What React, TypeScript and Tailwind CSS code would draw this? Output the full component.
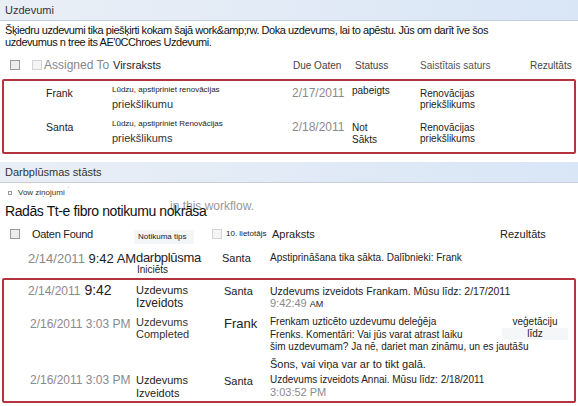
import React from 'react';

const Box = ({ light = false }: { light?: boolean }) => (
  <span
    className={`inline-block w-[10px] h-[10px] border ${
      light ? 'border-[#d4d4d4] bg-[#f4f4f4]' : 'border-[#9a9a9a] bg-[#ececec]'
    }`}
  />
);

const Bar = ({ title }: { title: string }) => (
  <div className="h-[21px] flex items-center pl-[5px] bg-gradient-to-r from-[#eaeff6] to-[#d9e6f6] border-b border-[#c4cdd8] text-[11px] text-[#333]">
    {title}
  </div>
);

const tasks = [
  { who: 'Frank', t1: 'Lūdzu, apstipriniet renovācijas', t2: 'priekšlikumu', date: '2/17/2011', st: ['pabeigts'], stPad: 'pt-[1px]', rel: ['Renovācijas', 'priekšlikums'], relPad: 'pt-[4px]' },
  { who: 'Santa', t1: 'Lūdzu, apstipriniet Renovācijas', t2: 'priekšlikums', date: '2/18/2011', st: ['Not', 'Sākts'], stPad: 'pt-[4px]', rel: ['Renovācijas', 'priekšlikums'], relPad: 'pt-[4px]' },
];

export default function App() {
  return (
    <div className="w-[578px] h-[406px] overflow-hidden bg-white text-[#222] font-['Liberation_Sans',Arial,sans-serif]">
      {/* Tasks */}
      <Bar title="Uzdevumi" />
      <div className="pl-[5px] pt-[3px] text-[11px] leading-[12px] tracking-[-0.45px] text-[#111]">
        <div>Šķiedru uzdevumi tika piešķirti kokam šajā work&amp;amp;rw. Doka uzdevums, lai to apēstu. Jūs om darīt īve šos</div>
        <div>uzdevumus n tree its AE'0CChroes Uzdevumi.</div>
      </div>

      <div className="flex items-center h-[20px] mt-[7px] text-[11px]">
        <div className="w-[30px] pl-[10px] flex"><Box /></div>
        <div className="w-[82px] pl-[2px] flex items-center gap-[2px]">
          <Box light />
          <span className="text-[12px] text-[#888]">Assigned To</span>
        </div>
        <div className="w-[178px] pl-[1px]">Virsraksts</div>
        <div className="w-[62px] pl-[3px] text-[10px] text-[#444]">Due Oaten</div>
        <div className="w-[66px] pl-[3px] text-[10px] text-[#444]">Statuss</div>
        <div className="w-[110px] pl-[2px] text-[10px] text-[#555]">Saistītais saturs</div>
        <div className="pl-[2px] text-[10px] text-[#444]">Rezultāts</div>
      </div>

      <div className="mx-[2px] mt-[4px] border-2 border-[#b3343d] rounded-[2px] h-[75px] pt-[3px] flex flex-col">
        {tasks.map((r) => (
          <div key={r.who} className="flex h-[34px]">
            <div className="w-[26px]" />
            <div className="w-[82px] pl-[16px] pt-[3px] text-[10.5px] leading-[12px]">{r.who}</div>
            <div className="w-[180px]">
              <div className="text-[8px] leading-[12px]">{r.t1}</div>
              <div className="text-[11px] leading-[16px] text-[#333]">{r.t2}</div>
            </div>
            <div className="w-[60px] pt-[2px] text-[12px] text-[#8a8a8a] leading-[14px]">{r.date}</div>
            <div className={`w-[68px] text-[10px] leading-[12px] ${r.stPad}`}>
              {r.st.map((s) => (
                <div key={s}>{s}</div>
              ))}
            </div>
            <div className={`text-[10px] leading-[11px] ${r.relPad}`}>
              {r.rel.map((s) => (
                <div key={s}>{s}</div>
              ))}
            </div>
          </div>
        ))}
      </div>

      {/* Workflow history */}
      <div className="mt-[8px]">
        <Bar title="Darbplūsmas stāsts" />
      </div>
      <div className="flex items-center gap-[6px] pl-[8px] mt-[4px] h-[12px] text-[8px] text-[#333]">
        <span className="inline-block w-[4px] h-[4px] border border-[#999]" />
        <span>Vow ziņojumi</span>
        <span className="text-[#bbb] -mt-[6px] -ml-[4px]">ˉ</span>
      </div>
      <div className="relative pl-[5px] mt-[3px] h-[18px] leading-[18px]">
        <span className="absolute left-[170px] top-[-4px] leading-[16px] text-[12px] text-[#999]">in this workflow.</span>
        <span className="relative text-[14px] tracking-[-0.4px] text-[#111]">Radās Tt-e fibro notikumu nokrāsa</span>
      </div>

      <div className="flex items-center h-[20px] mt-[4px]">
        <div className="w-[30px] pl-[10px] flex"><Box /></div>
        <div className="w-[104px] pl-[2px] text-[11px] tracking-[-0.3px]">Oaten Found</div>
        <div className="w-[76px]">
          <span className="inline-block text-[8px] leading-[14px] bg-[#f3f5f7] pl-[4px] pr-[8px]">Notikuma tips</span>
        </div>
        <div className="w-[60px] pl-[2px] flex items-center gap-[4px]">
          <Box light />
          <span className="text-[8px]">10. lietotājs</span>
        </div>
        <div className="w-[228px] pl-[2px] text-[11px]">Apraksts</div>
        <div className="pl-[2px] text-[11px]">Rezultāts</div>
      </div>

      <div className="flex mt-[6px] h-[28px]">
        <div className="w-[136px] pl-[28px] whitespace-nowrap leading-[16px]">
          <span className="text-[13px] text-[#8a8a8a]">2/14/2011</span>
          <span className="text-[13px]"> 9:42 AM</span>
        </div>
        <div className="w-[86px]">
          <div className="text-[13px] leading-[15px] tracking-[-0.3px]">darbplūsma</div>
          <div className="text-[10px] leading-[9px] pl-[1px]">Iniciēts</div>
        </div>
        <div className="w-[48px] text-[11px] leading-[16px]">Santa</div>
        <div className="text-[10px] leading-[16px]">Apstiprināšana tika sākta. Dalībnieki: Frank</div>
      </div>

      <div className="mx-[2px] border-2 border-[#b3343d] rounded-[2px] h-[125px] overflow-hidden pt-[2px] flex flex-col">
        <div className="flex h-[34px]">
          <div className="w-[132px] pl-[24px] whitespace-nowrap leading-[16px]">
            <span className="text-[12px] text-[#8a8a8a]">2/14/2011</span>
            <span className="text-[14px]"> 9:42</span>
          </div>
          <div className="w-[88px] leading-[13px] pt-[2px]">
            <div className="text-[11px]">Uzdevums</div>
            <div className="text-[12px]">Izveidots</div>
          </div>
          <div className="w-[46px] text-[11px] leading-[16px] pt-[1px]">Santa</div>
          <div className="text-[10.5px] leading-[12px] pt-[3px] whitespace-nowrap">
            <div>Uzdevums izveidots Frankam. Mūsu līdz: 2/17/2011</div>
            <div>
              <span className="text-[11px] text-[#8a8a8a]">9:42:49</span> <span className="text-[9px]">AM</span>
            </div>
          </div>
        </div>

        <div className="flex h-[56px]">
          <div className="w-[132px] pl-[26px] text-[12px] leading-[16px] text-[#8a8a8a] whitespace-nowrap">2/16/2011 3:03 PM</div>
          <div className="w-[88px] text-[11px] leading-[12px] text-[#333]">
            <div>Uzdevums</div>
            <div>Completed</div>
          </div>
          <div className="w-[46px] text-[13px] leading-[16px]">Frank</div>
          <div className="w-[232px] text-[10px] leading-[12.5px] whitespace-nowrap">
            <div>Frenkam uzticēto uzdevumu deleģēja</div>
            <div>Frenks. Komentāri: Vai jūs varat atrast laiku</div>
            <div>šim uzdevumam? Ja nē, dariet man zināmu, un es jautāšu</div>
            <div className="text-[11px] leading-[14px] mt-[3px]">Šons, vai viņa var ar to tikt galā.</div>
          </div>
          <div className="w-[66px] text-[10px] leading-[12px] text-center">
            <div>veģetāciju</div>
            <div className="bg-[#f5f6f7]">līdz</div>
          </div>
        </div>

        <div className="flex">
          <div className="w-[132px] pl-[26px] text-[12px] leading-[16px] text-[#8a8a8a] whitespace-nowrap">2/16/2011 3:03 PM</div>
          <div className="w-[88px] text-[11px] leading-[13px] pt-[2px]">
            <div>Uzdevums</div>
            <div>Izveidots</div>
          </div>
          <div className="w-[46px] text-[11px] leading-[16px] pt-[1px]">Santa</div>
          <div className="text-[10px] leading-[13px] pt-[1px] whitespace-nowrap">
            <div>Uzdevums izveidots Annai. Mūsu līdz: 2/18/2011</div>
            <div className="text-[11px] text-[#8a8a8a]">3:03:52 PM</div>
          </div>
        </div>
      </div>
    </div>
  );
}
